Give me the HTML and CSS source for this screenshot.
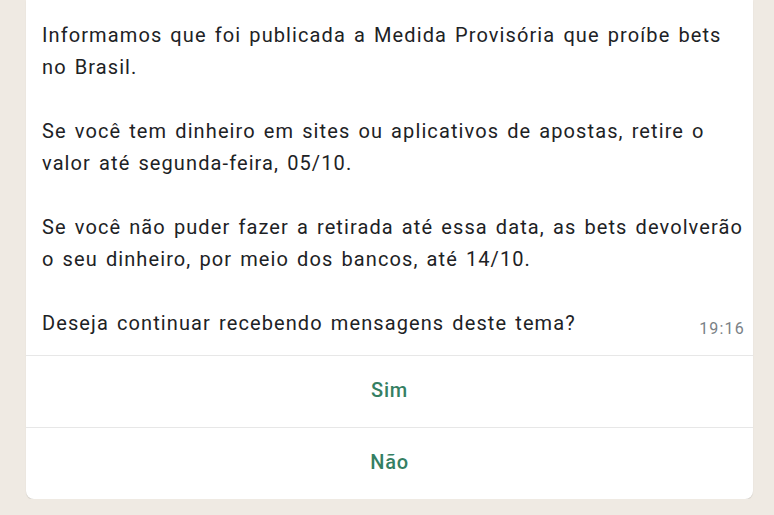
FILE: index.html
```html
<!DOCTYPE html>
<html lang="pt-BR">
<head>
    <meta charset="UTF-8">
    <meta name="viewport" content="width=device-width, initial-scale=1.0">
    <title>Mensagem</title>
    <link rel="stylesheet" href="styles.css">
</head>
<body>
    <div class="chat">
        <div class="bubble">
            <div class="message">
                <p>Informamos que foi publicada a Medida Provisória que proíbe bets<br>no Brasil.</p>
                <p>Se você tem dinheiro em sites ou aplicativos de apostas, retire o<br>valor até segunda-feira, 05/10.</p>
                <p>Se você não puder fazer a retirada até essa data, as bets devolverão<br>o seu dinheiro, por meio dos bancos, até 14/10.</p>
                <div class="last-line">
                    <span>Deseja continuar recebendo mensagens deste tema?</span>
                    <span class="time">19:16</span>
                </div>
            </div>
            <button class="reply">Sim</button>
            <button class="reply">Não</button>
        </div>
    </div>
</body>
</html>
```

FILE: styles.css
```css
body {
    margin: 0;
    background-color: #efeae3;
    font-family: Roboto, "Liberation Sans", sans-serif;
}
.chat {
    padding: 0 21px 0 26px;
}
.bubble {
    background-color: #fff;
    border-radius: 0 0 8px 8px;
    box-shadow: 0 1px 1px rgba(0, 0, 0, 0.12);
}
.message {
    padding: 19px 6px 16px 16px;
    font-size: 20px;
    line-height: 32px;
    letter-spacing: 1.1px;
    word-spacing: 2px;
    white-space: nowrap;
    color: #1d2225;
}
.message p {
    margin: 0 0 32px 0;
}
.last-line {
    display: flex;
    justify-content: space-between;
    align-items: flex-end;
}
.time {
    padding-right: 2px;
    font-size: 16px;
    line-height: 20px;
    letter-spacing: 1.2px;
    word-spacing: 0;
    color: #7a8186;
}
.reply {
    display: block;
    width: 100%;
    height: 72px;
    padding-bottom: 4px;
    border: none;
    border-top: 1px solid #e7e7e7;
    background: none;
    font-family: Roboto, "Liberation Sans", sans-serif;
    font-size: 20px;
    font-weight: 500;
    letter-spacing: 0.8px;
    color: #357f63;
    cursor: pointer;
}
```
